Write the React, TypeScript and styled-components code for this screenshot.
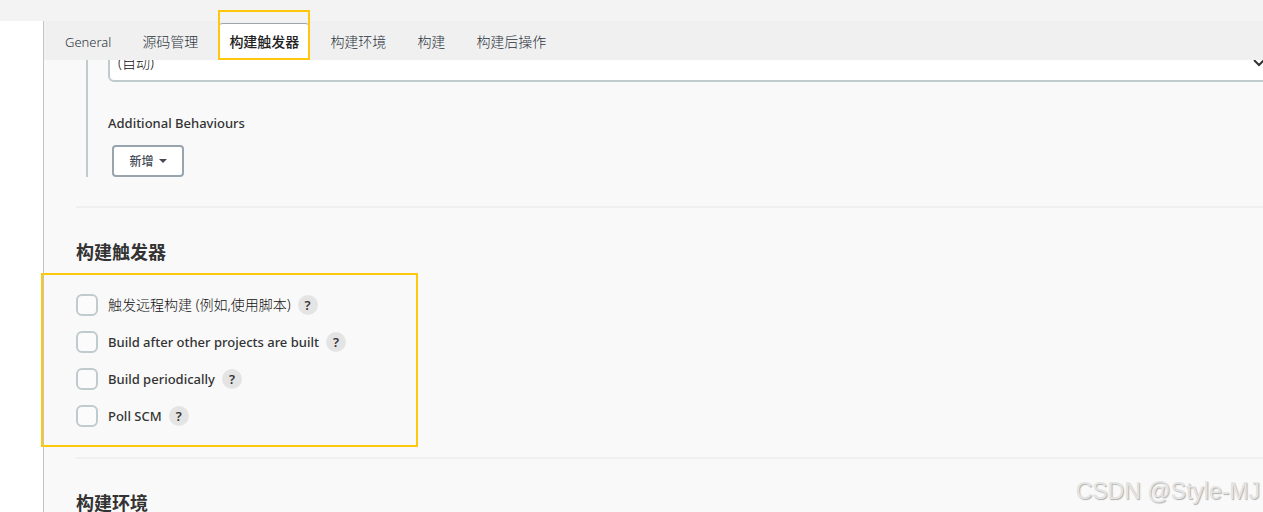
import React from "react";
import styled, { createGlobalStyle, css } from "styled-components";

const GlobalStyle = createGlobalStyle`
  *, *::before, *::after { box-sizing: border-box; }
  body {
    margin: 0;
    background: #fff;
    color: #333;
    font-family: "Noto Sans", "Noto Sans CJK SC", sans-serif;
    font-size: 14px;
  }
  button, select, input { font-family: inherit; }
`;

const highlight = css`
  position: absolute;
  border: 2px solid #ffc80a;
  pointer-events: none;
`;

const Shell = styled.div`
  position: relative;
  display: flex;
  flex-direction: column;
  height: 100vh;
  overflow: hidden;
`;

const Breadcrumbs = styled.header`
  flex: none;
  height: 21px;
  background: #f3f3f3;
`;

const Columns = styled.div`
  display: flex;
  flex: 1;
  min-height: 0;
`;

const SidePanel = styled.aside`
  flex: none;
  width: 43px;
  background: #fff;
`;

const Main = styled.main`
  flex: 1;
  min-width: 0;
  border-left: 1px solid #bfc6c8;
  background: #f9f9f9;
`;

const TabBar = styled.nav`
  display: flex;
  align-items: flex-end;
  gap: 11px;
  height: 39px;
  padding-left: 11px;
  background: #f0f0f0;
`;

const Tab = styled.button<{ $active?: boolean; $latin?: boolean }>`
  position: relative;
  height: 37px;
  padding: 0 10px;
  border: 0;
  border-top: 1px solid ${(p) => (p.$active ? "#9aa5ae" : "transparent")};
  border-radius: 4px 4px 0 0;
  background: ${(p) => (p.$active ? "#fff" : "transparent")};
  color: ${(p) => (p.$active ? "#222" : "#2c333d")};
  font-size: ${(p) => (p.$latin ? "13px" : "14px")};
  font-weight: ${(p) => (p.$active ? 500 : 300)};
  line-height: 36px;
  white-space: nowrap;
`;

const TabHighlight = styled.span`
  ${highlight}
  inset: -14px -1px 0 -1px;
`;

const Form = styled.form`
  padding-left: 32px;
`;

const Chunk = styled.div`
  margin-left: 10px;
  padding-left: 20px;
  border-left: 2px solid #bfcbcd;
`;

const ScrolledField = styled.div`
  display: flex;
  align-items: flex-end;
  height: 22px;
  overflow: hidden;
`;

const SelectWrap = styled.div`
  position: relative;
  flex: 1;
  margin-right: -12px;
`;

const Select = styled.select`
  display: block;
  appearance: none;
  width: 100%;
  height: 40px;
  padding: 0 8px;
  border: 2px solid #bfcbcd;
  border-radius: 6px;
  background: #fff;
  color: #111;
  font-size: 14px;
  font-weight: 300;
`;

const SelectArrow = styled.svg`
  position: absolute;
  top: 16px;
  right: 9px;
  width: 14px;
  height: 9px;
  pointer-events: none;
`;

const FieldLabel = styled.div`
  margin-top: 31px;
  color: #333;
  font-size: 13px;
  font-weight: 500;
  line-height: 20px;
`;

const AddButton = styled.button`
  display: flex;
  align-items: center;
  justify-content: center;
  gap: 5px;
  width: 72px;
  height: 32px;
  margin: 12px 0 0 4px;
  padding: 0;
  border: 2px solid #98a5af;
  border-radius: 4px;
  background: #fff;
  color: #444b54;
  font-size: 12px;
  font-weight: 500;
`;

const Divider = styled.hr`
  height: 2px;
  margin: 0;
  border: 0;
  background: #f0f0f0;
`;

const Section = styled.section<{ $first?: boolean }>`
  position: relative;
  margin-top: ${(p) => (p.$first ? "29px" : "0")};
`;

const Heading = styled.h2`
  margin: 0;
  padding: 31px 0 29px;
  color: #333;
  font-size: 18px;
  font-weight: 700;
  line-height: 26px;
`;

const Options = styled.div`
  display: flex;
  flex-direction: column;
  gap: 15px;
  padding-bottom: 30px;
`;

const OptionsHighlight = styled.span`
  ${highlight}
  top: 67px;
  bottom: 10px;
  left: -35px;
  width: 377px;
`;

const Option = styled.div`
  display: flex;
  align-items: center;
  height: 22px;
`;

const Checkbox = styled.input`
  appearance: none;
  flex: none;
  width: 22px;
  height: 22px;
  margin: 0 10px 0 0;
  border: 2px solid #bfcbcd;
  border-radius: 6px;
  background: #fbfbfb;
`;

const OptionLabel = styled.label<{ $cjk?: boolean }>`
  margin-right: 7px;
  color: ${(p) => (p.$cjk ? "#111" : "#333")};
  font-size: ${(p) => (p.$cjk ? "14px" : "13px")};
  font-weight: ${(p) => (p.$cjk ? 300 : 500)};
  line-height: 22px;
  white-space: nowrap;
`;

const Help = styled.button`
  width: 20px;
  height: 20px;
  padding: 0;
  border: 0;
  border-radius: 50%;
  background: #e4e4e4;
  color: #333;
  font-size: 13px;
  font-weight: 600;
  line-height: 20px;
  text-align: center;
`;

const Watermark = styled.div`
  position: absolute;
  right: 3px;
  bottom: 8px;
  color: #e4e4e4;
  font-family: "Liberation Sans", sans-serif;
  font-size: 23px;
  line-height: 26px;
  text-shadow: 1px 1px 1px #b0b0b0;
  pointer-events: none;
`;

const tabs = ["General", "源码管理", "构建触发器", "构建环境", "构建", "构建后操作"];

const triggers = [
  { id: "remote", label: "触发远程构建 (例如,使用脚本)", cjk: true },
  { id: "after", label: "Build after other projects are built" },
  { id: "periodic", label: "Build periodically" },
  { id: "poll", label: "Poll SCM" },
];

export default function App() {
  return (
    <>
      <GlobalStyle />
      <Shell>
        <Breadcrumbs />
        <Columns>
          <SidePanel />
          <Main>
            <TabBar>
              {tabs.map((name, i) => (
                <Tab key={name} type="button" $active={i === 2} $latin={i === 0}>
                  {name}
                  {i === 2 && <TabHighlight />}
                </Tab>
              ))}
            </TabBar>
            <Form>
              <Chunk>
                <ScrolledField>
                  <SelectWrap>
                    <Select aria-label="源码库浏览器" defaultValue="auto">
                      <option value="auto">(自动)</option>
                    </Select>
                    <SelectArrow viewBox="0 0 14 9" fill="none" stroke="#333" strokeWidth="2">
                      <path d="M2 2l5 5 5-5" />
                    </SelectArrow>
                  </SelectWrap>
                </ScrolledField>
                <FieldLabel>Additional Behaviours</FieldLabel>
                <AddButton type="button">
                  新增
                  <svg width="8" height="4" viewBox="0 0 8 4" fill="#444b54">
                    <path d="M0 0h8L4 4z" />
                  </svg>
                </AddButton>
              </Chunk>
              <Section $first>
                <Divider />
                <Heading>构建触发器</Heading>
                <Options>
                  {triggers.map((t) => (
                    <Option key={t.id}>
                      <Checkbox type="checkbox" id={t.id} />
                      <OptionLabel htmlFor={t.id} $cjk={t.cjk}>
                        {t.label}
                      </OptionLabel>
                      <Help type="button" aria-label={`${t.label} ?`}>?</Help>
                    </Option>
                  ))}
                </Options>
                <OptionsHighlight />
              </Section>
              <Section>
                <Divider />
                <Heading>构建环境</Heading>
              </Section>
            </Form>
          </Main>
        </Columns>
        <Watermark>CSDN @Style-MJ</Watermark>
      </Shell>
    </>
  );
}
